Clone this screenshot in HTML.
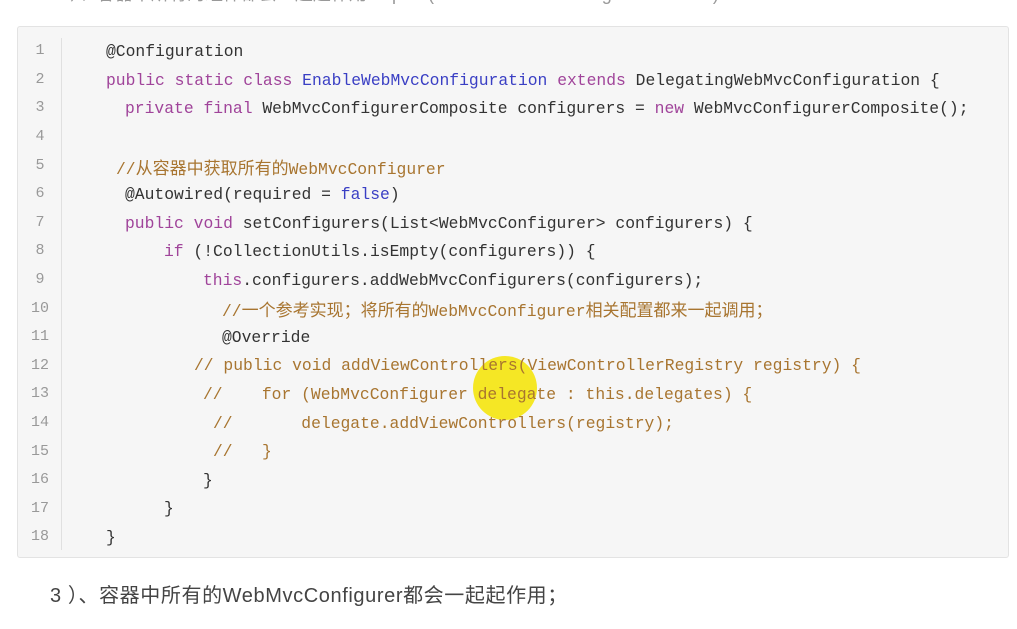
<!DOCTYPE html>
<html><head><meta charset="utf-8"><style>
body{margin:0;width:1017px;height:629px;background:#fff;position:relative;overflow:hidden;font-family:"Liberation Mono","Noto Sans CJK SC",monospace;}
.box{position:absolute;left:17px;top:26px;width:990px;height:530px;background:#f6f6f6;border:1px solid #e3e3e3;border-radius:3px;}
.gut{position:absolute;left:61px;top:38px;width:1px;height:512px;background:#e0e0e0;}
.n{position:absolute;left:20px;width:40px;text-align:center;font-size:15px;color:#999;}
.l{position:absolute;font-size:16.35px;color:#333;white-space:pre;}
.k{color:#a0449a}.t{color:#3a3fc4}.c{color:#a87530}.b{color:#3a3fc4}
.z{font-size:17px;font-family:"Noto Sans CJK SC",sans-serif;}
.foot{position:absolute;left:50px;top:579px;font-family:"Liberation Sans","Noto Sans CJK SC",sans-serif;font-size:20px;letter-spacing:0.6px;color:#444;}
.top{position:absolute;left:60px;top:-20px;font-family:"Liberation Sans","Noto Sans CJK SC",sans-serif;font-size:18px;color:#999;}
.dot{position:absolute;left:473px;top:356px;width:64px;height:64px;border-radius:50%;background:rgba(245,228,0,0.85);}
</style></head><body>
<div class="top">3）、容器中所有的组件都会一起起作用 Import (EnableWebMvcConfiguration.class)</div>
<div class="box"></div>
<div class="gut"></div>
<div class="n" style="top:42px">1</div><div class="n" style="top:71px">2</div><div class="n" style="top:99px">3</div><div class="n" style="top:128px">4</div><div class="n" style="top:157px">5</div><div class="n" style="top:185px">6</div><div class="n" style="top:214px">7</div><div class="n" style="top:242px">8</div><div class="n" style="top:271px">9</div><div class="n" style="top:300px">10</div><div class="n" style="top:328px">11</div><div class="n" style="top:357px">12</div><div class="n" style="top:385px">13</div><div class="n" style="top:414px">14</div><div class="n" style="top:443px">15</div><div class="n" style="top:471px">16</div><div class="n" style="top:500px">17</div><div class="n" style="top:528px">18</div>
<div class="l" style="left:106px;top:42px">@Configuration</div>
<div class="l" style="left:106px;top:71px"><span class="k">public static class</span> <span class="t">EnableWebMvcConfiguration</span> <span class="k">extends</span> DelegatingWebMvcConfiguration {</div>
<div class="l" style="left:125px;top:99px"><span class="k">private final</span> WebMvcConfigurerComposite configurers = <span class="k">new</span> WebMvcConfigurerComposite();</div>
<div class="l c" style="left:116px;top:154px">//<span class="z">从容器中获取所有的</span>WebMvcConfigurer</div>
<div class="l" style="left:125px;top:185px">@Autowired(required = <span class="b">false</span>)</div>
<div class="l" style="left:125px;top:214px"><span class="k">public void</span> setConfigurers(List&lt;WebMvcConfigurer&gt; configurers) {</div>
<div class="l" style="left:164px;top:242px"><span class="k">if</span> (!CollectionUtils.isEmpty(configurers)) {</div>
<div class="l" style="left:203px;top:271px"><span class="k">this</span>.configurers.addWebMvcConfigurers(configurers);</div>
<div class="l c" style="left:222px;top:296px">//<span class="z">一个参考实现；将所有的</span>WebMvcConfigurer<span class="z">相关配置都来一起调用；</span></div>
<div class="l" style="left:222px;top:328px">@Override</div>
<div class="dot"></div>
<div class="l c" style="left:194px;top:356px">// public void addViewControllers(ViewControllerRegistry registry) {</div>
<div class="l c" style="left:203px;top:385px">//    for (WebMvcConfigurer delegate : this.delegates) {</div>
<div class="l c" style="left:213px;top:414px">//       delegate.addViewControllers(registry);</div>
<div class="l c" style="left:213px;top:442px">//   }</div>
<div class="l" style="left:203px;top:471px">}</div>
<div class="l" style="left:164px;top:499px">}</div>
<div class="l" style="left:106px;top:528px">}</div>
<div class="foot">3 ）、容器中所有的WebMvcConfigurer都会一起起作用；</div>
</body></html>
